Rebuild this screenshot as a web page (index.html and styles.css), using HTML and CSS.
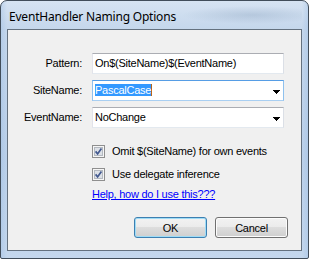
FILE: index.html
```html
<!DOCTYPE html>
<html>
<head>
<meta charset="utf-8">
<link rel="stylesheet" href="styles.css">
</head>
<body>
<div class="window">
  <div class="titlebar"><span class="title">EventHandler Naming Options</span></div>
  <div class="client">
    <div class="form">
      <label class="lbl">Pattern:</label>
      <div class="field"><span class="val">On$(SiteName)$(EventName)</span></div>
      <label class="lbl">SiteName:</label>
      <div class="field combo focused"><span class="val"><span class="sel">PascalCase</span></span><svg class="arrow" width="7" height="4" viewBox="0 0 7 4"><path d="M0 0h7v1h-1v1h-1v1h-1v1h-1v-1h-1v-1h-1v-1h-1z" fill="#000"/></svg></div>
      <label class="lbl">EventName:</label>
      <div class="field combo"><span class="val">NoChange</span><svg class="arrow" width="7" height="4" viewBox="0 0 7 4"><path d="M0 0h7v1h-1v1h-1v1h-1v1h-1v-1h-1v-1h-1v-1h-1z" fill="#000"/></svg></div>
    </div>
    <div class="options">
      <div class="check">
        <svg class="box" width="13" height="13" viewBox="0 0 13 13"><rect x="0.5" y="0.5" width="12" height="12" fill="#f6f6f6" stroke="#8f8f8f"/><rect x="2.5" y="2.5" width="8" height="8" fill="#dde1e7" stroke="#b4b9c0"/><path d="M3.6 6.4 L5.6 8.9 L9.4 3.4" stroke="#43598f" stroke-width="1.7" fill="none"/></svg>
        <span>Omit $(SiteName) for own events</span>
      </div>
      <div class="check second">
        <svg class="box" width="13" height="13" viewBox="0 0 13 13"><rect x="0.5" y="0.5" width="12" height="12" fill="#f6f6f6" stroke="#8f8f8f"/><rect x="2.5" y="2.5" width="8" height="8" fill="#dde1e7" stroke="#b4b9c0"/><path d="M3.6 6.4 L5.6 8.9 L9.4 3.4" stroke="#43598f" stroke-width="1.7" fill="none"/></svg>
        <span>Use delegate inference</span>
      </div>
      <a class="help" href="#">Help, how do I use this???</a>
    </div>
    <div class="buttons">
      <button class="btn default">OK</button>
      <button class="btn">Cancel</button>
    </div>
  </div>
</div>
</body>
</html>
```
FILE: styles.css
```css
html, body {
  margin: 0;
  padding: 0;
  background: #ffffff;
}

.window {
  width: 309px;
  height: 259px;
  box-sizing: border-box;
  border: 1px solid #414d5a;
  border-radius: 7px 7px 2px 2px;
  padding: 0 6px 7px 6px;
  display: flex;
  flex-direction: column;
  background:
    linear-gradient(90deg, rgba(150,185,225,0.35) 0px, rgba(255,255,255,0) 6px, rgba(255,255,255,0) 301px, rgba(150,185,225,0.35) 307px),
    linear-gradient(180deg, #d6e3f2 0px, #c5d7ec 28px, #bcd1ea 60%, #c4d7ed 100%);
}

.titlebar {
  height: 28px;
  flex: none;
  box-sizing: border-box;
  padding: 6px 0 0 2px;
  background: radial-gradient(ellipse 70px 9px at 245px 14px, rgba(120,145,175,0.28), rgba(120,145,175,0) 100%);
}

.title {
  font-family: "Noto Sans", "Open Sans", sans-serif;
  font-size: 12px;
  line-height: 15px;
  color: #000;
  letter-spacing: -0.2px;
}

.client {
  flex: 1;
  border: 1px solid #64717f;
  background: #f0f0f0;
  display: flex;
  flex-direction: column;
  font-family: "Liberation Sans", Arial, sans-serif;
  font-size: 11px;
  line-height: 13px;
  letter-spacing: -0.25px;
  color: #000;
}

.form {
  display: grid;
  grid-template-columns: 74px 192px;
  grid-auto-rows: 21px;
  column-gap: 10px;
  row-gap: 6px;
  margin-top: 23px;
}

.lbl {
  text-align: right;
  padding-top: 4px;
  white-space: nowrap;
}

.field {
  box-sizing: border-box;
  height: 21px;
  border: 1px solid;
  border-color: #abadb3 #dbdfe6 #e3e9ef #e2e3ea;
  background: #fff;
  padding: 3px 0 0 2px;
  display: flex;
  align-items: flex-start;
  white-space: nowrap;
}

.field.focused {
  border-color: #569de5 #8fc1ee #a9cff2 #8fc1ee;
}

.val {
  flex: 1;
  display: block;
}

.sel {
  background: #3399ff;
  color: #fff;
  box-shadow: 1px 0 0 #b8651a;
}

.arrow {
  flex: none;
  margin-top: 6px;
  margin-right: 3px;
  display: block;
}

.options {
  margin-left: 84px;
  margin-top: 17px;
  display: flex;
  flex-direction: column;
  align-items: flex-start;
}

.check {
  display: flex;
  align-items: center;
  height: 13px;
  gap: 7px;
  white-space: nowrap;
}

.check.second {
  margin-top: 10px;
}

.box {
  display: block;
  flex: none;
}

.help {
  margin-top: 7px;
  color: #0000ff;
  text-decoration: underline;
  white-space: nowrap;
}

.buttons {
  display: flex;
  justify-content: flex-end;
  gap: 8px;
  margin-top: 16px;
  padding-right: 13px;
}

.btn {
  box-sizing: border-box;
  width: 73px;
  height: 21px;
  padding: 0;
  border: 1px solid #707070;
  border-radius: 3px;
  background: linear-gradient(180deg, #f2f2f2 0%, #ebebeb 50%, #dddddd 50%, #cfcfcf 100%);
  box-shadow: inset 0 0 0 1px #fcfcfc;
  font-family: "Liberation Sans", Arial, sans-serif;
  font-size: 11px;
  letter-spacing: -0.25px;
  color: #000;
}

.btn.default {
  border-color: #3c7fb1;
  box-shadow: inset 0 0 0 1px #9fdcf6;
}
```
